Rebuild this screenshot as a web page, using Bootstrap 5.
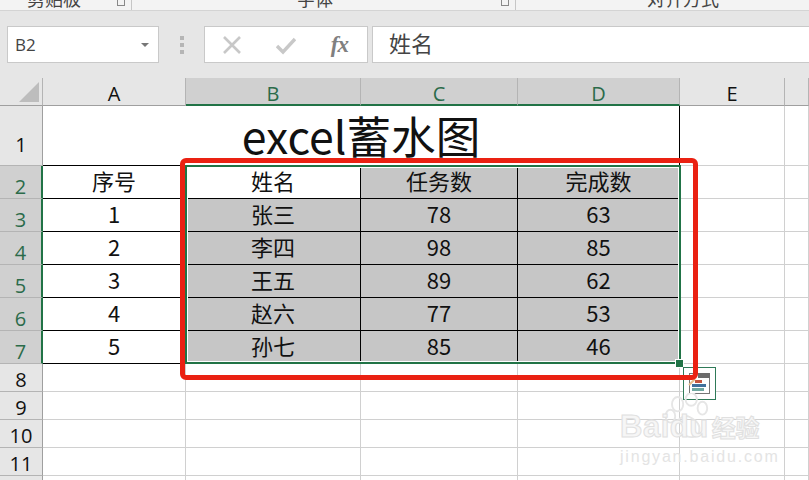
<!DOCTYPE html>
<html lang="zh">
<head>
<meta charset="utf-8">
<title>excel蓄水图</title>
<link href="https://cdn.jsdelivr.net/npm/bootstrap@5.3.0/dist/css/bootstrap.min.css" rel="stylesheet">
<style>
html,body{margin:0;height:480px;overflow:hidden;background:#e6e6e6}
body{font-family:"Liberation Sans","Noto Sans CJK SC",sans-serif;color:#111}
.xl-ribbon{height:11px;background:#f3f3f3;border-bottom:1px solid #d4d4d4;overflow:hidden;position:relative}
.xl-group{height:10px;overflow:hidden;border-right:1px solid #c6c6c6;position:relative;flex:none}
.xl-group span{display:block;font:18px/18px "Noto Sans CJK SC",sans-serif;margin-top:-11px;color:#444}
.xl-launch{position:absolute;right:6px;top:0;width:8px;height:6px;border:1px solid #888;border-top:0}
.xl-g1{width:132px;padding-left:27px}.xl-g2{width:384px;padding-left:165px}.xl-g3{flex:1;border:0;padding-left:131px}
.xl-fbar{height:67px;padding:15px 0 0 7px;align-items:flex-start}
.xl-box{height:37px;background:#fff;border:1px solid #c9c9c9}
.xl-name{width:152px;padding-left:7px;font-size:17px;line-height:35px;color:#444;font-family:"Open Sans",sans-serif}
.xl-caret{width:0;height:0;border:4px solid transparent;border-top:4px solid #777;border-bottom:0;margin-right:9px}
.xl-dots{width:45px;height:37px;gap:3px}
.xl-dots i{width:4px;height:4px;background:#b5b5b5;display:block}
.xl-fn{width:164px;margin-right:4px;padding:0 19px 0 17px}
.xl-fx{font:italic bold 23px/1 "Liberation Serif",serif;color:#808080;letter-spacing:-1px}
.xl-formula{flex:1;border-right:0;padding-left:16px;font:22px/30px "Noto Sans CJK SC",sans-serif;color:#444}
.xl-wrap{position:relative;height:402px;overflow:hidden;background:#fff}
.xl-grid{table-layout:fixed;width:809px;border-collapse:separate;border-spacing:0;font-size:22px}
.xl-grid td,.xl-grid th{border-right:1px solid #d0d0d0;border-bottom:1px solid #d0d0d0;padding:0;text-align:center;font-weight:400;vertical-align:middle;overflow:hidden;white-space:nowrap;background:#fff;font-family:"Noto Sans CJK SC",sans-serif;line-height:1}
.xl-grid thead th{background:#e6e6e6;height:28px;border-right-color:#b4b4b4;border-bottom-color:#9f9f9f;font:20px/1 "Open Sans",sans-serif;padding-top:5px}
.xl-grid th.xl-rh{background:#e6e6e6;border-right-color:#9f9f9f;border-bottom-color:#b4b4b4;font:20px/1 "Open Sans",sans-serif;padding:4px 0 0}
.xl-grid .xl-r1 th.xl-rh{padding-top:19px}
.xl-grid .xl-rd th.xl-rh{padding-top:10px}
.xl-grid thead th.xl-on{background:#d0d0d0;color:#2b6b4a;border-bottom:2px solid #217346}
.xl-grid th.xl-rh.xl-on{background:#d0d0d0;color:#2b6b4a;border-right:2px solid #217346}
.xl-grid td.xl-k{border-color:#000;padding-bottom:5px}
.xl-grid td.xl-s{background:#c6c6c6}
.xl-grid td.xl-title{font-size:44.6px;border-right:1px solid #000;border-bottom-color:#000;vertical-align:top;line-height:58px;overflow:hidden}
.xl-r1{height:60px}.xl-rd{height:33px}.xl-re{height:28px}
.xl-corner{position:absolute;left:19px;top:4px;width:0;height:0;border-style:solid;border-width:0 0 20px 20px;border-color:transparent transparent #bdbdbd transparent}
.xl-sel{position:absolute;left:185px;top:87px;width:496px;height:199px;border:2px solid #217346;outline:1px solid #fff;outline-offset:-3px;pointer-events:none}
.xl-handle{position:absolute;left:676px;top:282px;width:7px;height:7px;background:#217346;border:1px solid #fff;box-sizing:content-box;margin:-1px}
.xl-red{position:absolute;left:180px;top:80px;width:518px;height:222px;border:5px solid #ea2112;border-radius:6px;pointer-events:none}
.xl-qa{position:absolute;left:683px;top:289px;width:33px;height:33px;background:#fff;border:1px solid #2f7a58}
.xl-mark{position:absolute;left:620px;top:333px;width:150px;color:#f6f6f6;-webkit-text-stroke:1px #e0e0e0;pointer-events:none}
.xl-mark b{font:700 31px/31px "Liberation Sans",sans-serif;letter-spacing:.5px}
.xl-mark u{font:700 24px/31px "Noto Sans CJK SC",sans-serif;text-decoration:none;margin-left:3px}
.xl-mark p{margin:5px 0 0;font:16px/16px "Liberation Sans",sans-serif;letter-spacing:1.8px;white-space:nowrap;color:#e4e4e4;-webkit-text-stroke:0}
.xl-paw{position:absolute;left:664px;top:315px}
</style>
</head>
<body>
<div class="xl-ribbon d-flex">
  <div class="xl-group xl-g1"><span>剪贴板</span><i class="xl-launch"></i></div>
  <div class="xl-group xl-g2"><span>字体</span><i class="xl-launch"></i></div>
  <div class="xl-group xl-g3"><span>对齐方式</span></div>
</div>
<div class="xl-fbar d-flex">
  <div class="xl-box xl-name d-flex align-items-center justify-content-between">B2<i class="xl-caret"></i></div>
  <div class="xl-dots d-flex flex-column align-items-center justify-content-center"><i></i><i></i><i></i></div>
  <div class="xl-box xl-fn d-flex align-items-center justify-content-between">
    <svg width="20" height="20" viewBox="0 0 20 20"><path d="M2 2 18 18M18 2 2 18" stroke="#c8c8c8" stroke-width="2.6" fill="none"/></svg>
    <svg width="20" height="20" viewBox="0 0 20 20"><path d="M1 11 7 17 19 4" stroke="#c8c8c8" stroke-width="3.4" fill="none"/></svg>
    <span class="xl-fx">fx</span>
  </div>
  <div class="xl-box xl-formula">姓名</div>
</div>
<div class="xl-wrap">
<table class="xl-grid">
  <colgroup><col style="width:43px"><col style="width:143px"><col style="width:175px"><col style="width:157px"><col style="width:162px"><col style="width:105px"><col></colgroup>
  <thead><tr><th></th><th>A</th><th class="xl-on">B</th><th class="xl-on">C</th><th class="xl-on">D</th><th>E</th><th></th></tr></thead>
  <tbody>
    <tr class="xl-r1"><th class="xl-rh">1</th><td class="xl-title" colspan="4">excel蓄水图</td><td></td><td></td></tr>
    <tr class="xl-rd"><th class="xl-rh xl-on">2</th><td class="xl-k">序号</td><td class="xl-k">姓名</td><td class="xl-k xl-s">任务数</td><td class="xl-k xl-s">完成数</td><td></td><td></td></tr>
    <tr class="xl-rd"><th class="xl-rh xl-on">3</th><td class="xl-k">1</td><td class="xl-k xl-s">张三</td><td class="xl-k xl-s">78</td><td class="xl-k xl-s">63</td><td></td><td></td></tr>
    <tr class="xl-rd"><th class="xl-rh xl-on">4</th><td class="xl-k">2</td><td class="xl-k xl-s">李四</td><td class="xl-k xl-s">98</td><td class="xl-k xl-s">85</td><td></td><td></td></tr>
    <tr class="xl-rd"><th class="xl-rh xl-on">5</th><td class="xl-k">3</td><td class="xl-k xl-s">王五</td><td class="xl-k xl-s">89</td><td class="xl-k xl-s">62</td><td></td><td></td></tr>
    <tr class="xl-rd"><th class="xl-rh xl-on">6</th><td class="xl-k">4</td><td class="xl-k xl-s">赵六</td><td class="xl-k xl-s">77</td><td class="xl-k xl-s">53</td><td></td><td></td></tr>
    <tr class="xl-rd"><th class="xl-rh xl-on">7</th><td class="xl-k">5</td><td class="xl-k xl-s">孙七</td><td class="xl-k xl-s">85</td><td class="xl-k xl-s">46</td><td></td><td></td></tr>
    <tr class="xl-re"><th class="xl-rh">8</th><td></td><td></td><td></td><td></td><td></td><td></td></tr>
    <tr class="xl-re"><th class="xl-rh">9</th><td></td><td></td><td></td><td></td><td></td><td></td></tr>
    <tr class="xl-re"><th class="xl-rh">10</th><td></td><td></td><td></td><td></td><td></td><td></td></tr>
    <tr class="xl-re"><th class="xl-rh">11</th><td></td><td></td><td></td><td></td><td></td><td></td></tr>
    <tr class="xl-re"><th class="xl-rh">12</th><td></td><td></td><td></td><td></td><td></td><td></td></tr>
  </tbody>
</table>
<i class="xl-corner"></i>
<div class="xl-sel"></div>
<div class="xl-handle"></div>
<div class="xl-qa">
  <svg class="d-block" width="31" height="31" viewBox="0 0 31 31"><rect x="5.5" y="5.5" width="20" height="20" fill="#fff" stroke="#777"/><rect x="14" y="5" width="12" height="5" fill="#6b6b6b"/><rect x="11" y="12" width="7" height="3" fill="#c5553d"/><rect x="8" y="16" width="14" height="3" fill="#41719c"/><rect x="8" y="20" width="12" height="3" fill="#6fa8a0"/><path d="M5 17 11 11" stroke="#e8bd8a" stroke-width="2"/></svg>
</div>
<div class="xl-red"></div>
<svg class="xl-paw" width="48" height="48" viewBox="0 0 60 60" aria-hidden="true"><g fill="none" stroke="#e6e6e6" stroke-width="2.4"><ellipse cx="17" cy="14" rx="7" ry="9"/><ellipse cx="34" cy="8" rx="7" ry="8"/><ellipse cx="48" cy="19" rx="6" ry="8"/><ellipse cx="8" cy="29" rx="6" ry="8"/><path d="M14 44c0-10 10-18 18-14s14 10 12 18-10 8-16 6-14 0-14-10z"/></g></svg>
<div class="xl-mark"><b>Bai</b><b>du</b><u>经验</u><p>jingyan.baidu.com</p></div>
</div>
<script src="https://cdn.jsdelivr.net/npm/bootstrap@5.3.0/dist/js/bootstrap.bundle.min.js"></script>
</body>
</html>
